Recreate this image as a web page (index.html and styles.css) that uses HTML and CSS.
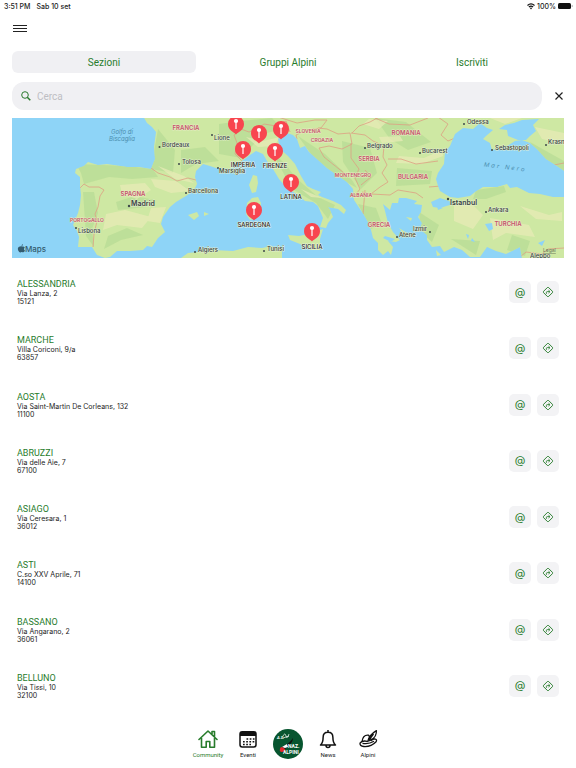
FILE: index.html
```html
<!DOCTYPE html>
<html lang="it">
<head>
<meta charset="utf-8">
<meta name="viewport" content="width=device-width, initial-scale=1">
<title>Sezioni</title>
<link rel="stylesheet" href="styles.css">
</head>
<body>
<svg class="defs" width="0" height="0" aria-hidden="true">
  <symbol id="route" viewBox="0 0 12 12"><rect x="2.4" y="2.4" width="7.2" height="7.2" rx="1" transform="rotate(45 6 6)" fill="none" stroke="currentColor" stroke-width=".9"/><path d="M4.4 7.8V6.5q0-.9.9-.9h2.2M6.5 4.2 8 5.6 6.5 7" fill="none" stroke="currentColor" stroke-width=".9"/></symbol>
  <symbol id="pin" viewBox="-9 -9 18 21" overflow="visible"><path d="M0 10.500C-2 8-8 6.500-8 0A8 8 0 0 1 8 0C8 6.500 2 8 0 10.500Z" fill="#f8454f"/><circle cy="-3" r="2.100" fill="#fff"/><path d="M0-2V5" stroke="#fff" stroke-width="1.200"/></symbol>
</svg>
<header>
  <div class="status">
    <span>3:51 PM</span><span>Sab 10 set</span>
    <span class="power">
      <svg width="8" height="7" viewBox="0 0 8 7" fill="none" stroke="#111" stroke-width="1.200"><path d="M.5 2.500Q4-.7 7.500 2.500M1.900 4Q4 2.100 6.100 4"/><path d="M2.900 5 4 6.400 5.100 5Q4 4.200 2.900 5Z" fill="#111" stroke="none"/></svg>
      100%
      <svg width="15" height="6" viewBox="0 0 15 6"><rect width="13" height="6" rx="1.500" fill="#111"/><path d="M13.800 2v2q.8-.2.800-1t-.8-1" fill="#777"/></svg>
    </span>
  </div>
  <button class="menu" aria-label="Menu"><svg width="14" height="8" viewBox="0 0 14 8"><path d="M0 1.500h14M0 4.500h14M0 7.500h14" stroke="#222" stroke-width="1"/></svg></button>
</header>
<main>
  <div class="tabs">
    <button class="tab active">Sezioni</button>
    <button class="tab">Gruppi Alpini</button>
    <button class="tab">Iscriviti</button>
  </div>
  <form class="search">
    <label class="field">
      <svg width="10" height="10" viewBox="0 0 10 10" fill="none" stroke="#2b7a2e"><circle cx="4" cy="4" r="3.300"/><path d="m6.300 6.300 3 3" stroke-width="1.500"/></svg>
      <input type="search" placeholder="Cerca" aria-label="Cerca">
    </label>
    <button class="clear" type="button" aria-label="Chiudi"><svg width="8" height="8" viewBox="0 0 8 8"><path d="m.5.500 7 7m0-7-7 7" stroke="#222" stroke-width="1.200"/></svg></button>
  </form>
  <svg class="map" viewBox="12 119 552 140" role="img" aria-label="Mappa delle sezioni">
    <defs>
      <clipPath id="land-clip">
        <path id="land" d="M143 117 147 124 152 128 156 133 154 148 155 160 151 170 139 168 127 168 107 165 98 166 88 163 84 167 76 170 75 174 80 178 80 187 81 196 80 206 78 214 73 226 77 232 79 238 78 248 92 248 97 256 105 259 110 258 117 252 130 252 143 251 147 247 152 248 158 239 165 233 161 225 163 218 170 208 176 203 186 197 194 191 197 185 195 178 196 172 203 165 210 167 216 169 230 170 236 167 242 162 246 159 250 156 256 152 263 155 267 162 273 170 279 180 287 189 298 196 305 202 313 203 318 207 323 219 320 228 326 229 328 224 333 218 330 211 328 208 338 210 344 215 346 211 341 206 333 202 322 198 318 196 321 193 313 190 307 187 301 177 295 165 288 157 280 150 278 140 281 136 287 134 293 136 297 140 300 149 305 147 309 153 317 160 327 169 337 176 347 183 353 190 354 201 358 207 364 216 368 223 371 231 373 239 378 244 378 251 383 256 388 252 391 256 393 248 388 242 396 243 400 241 393 233 388 224 385 212 383 205 390 211 392 204 398 204 399 199 406 199 417 202 414 205 422 206 421 213 418 218 422 224 420 230 427 236 427 241 432 248 440 247 444 253 454 248 462 251 470 258 480 258 487 248 496 252 506 255 520 248 522 260 566 260V198L553 198 540 195 529 194 517 188 510 189 507 185 497 188 483 188 475 193 470 197 458 199 450 198 440 192 438 187 436 180 438 174 444 165 445 153 450 147 455 135 463 129 473 130 480 124 487 129 493 131 486 137 483 140 490 144 492 151 499 149 507 147 515 142 522 141 530 144 537 150 546 160 554 165 566 173V117Z"/>
      </clipPath>
    </defs>
    <path d="M12 119H564V259H12Z" fill="#8ed4f7"/>
    <g fill="#cee8a3">
      <use href="#land"/>
      <path d="M253 176 257 177 258 184 256 193 252 194 249 186ZM252 199 258 198 261 204 259 217 254 220 250 221 246 215 247 204ZM288 236 299 237 309 235 323 230 320 240 320 251 311 251 300 245 290 241ZM181 259 188 254 198 253 213 251 233 252 248 248 262 249 272 247 276 252 282 250 282 259ZM188 216 197 213 199 217 194 221ZM204 213 209 215 204 217ZM373 229 378 234 377 237ZM406 218 412 219 411 222ZM399 229 407 234 405 237ZM436 251 441 256 437 257Z"/>
    </g>
    <g clip-path="url(#land-clip)">
      <g fill="#b6dc94">
        <path d="M76 165 127 167 153 170 158 178 132 180 109 178 84 185 81 174ZM83 193 94 193 98 214 92 230 94 248 86 237ZM116 203 135 197 155 201 146 208 118 211ZM108 237 127 229 143 236 121 241 104 250ZM158 130 175 151 173 174 151 170ZM181 151 205 148 219 162 196 165 181 174ZM219 125 240 122 272 119 282 130 263 135 241 159 219 155ZM271 151 286 166 296 179 318 198 335 206 328 220 316 204 292 190ZM298 137 325 155 352 181 357 189 344 182 316 162ZM342 142 370 149 377 174 361 190 343 163ZM375 119 406 123 431 143 408 151 390 140ZM397 169 432 172 430 185 396 187ZM358 205 376 209 382 225 371 230ZM476 191 504 187 506 193 486 200 473 200ZM530 143 566 163V176L539 157ZM419 213 439 226 432 243 421 233ZM451 240 480 242 476 256ZM512 236 530 242 525 257 507 251Z" opacity=".7"/>
      </g>
      <g fill="#e9ebb7">
        <path d="M151 180 176 182 190 192 171 194 155 188ZM120 186 145 184 151 191 137 200 122 195ZM106 215 125 211 151 218 142 229 117 226 103 231ZM151 209 166 208 160 224 147 222ZM158 167 184 177 194 184 175 180ZM246 138 263 142 280 138 274 147 258 148ZM379 138 400 137 403 142 382 144ZM399 157 424 159 442 151 443 157 421 165 396 164ZM454 205 469 202 483 216 473 230 454 222ZM490 219 529 226 535 238 506 234 493 241ZM520 207 549 216 562 213 562 222 536 220ZM369 120 388 122 379 130 363 125ZM490 119 522 119 505 125ZM535 128 564 134V145L542 140ZM301 190 322 199 311 198Z" opacity=".7"/>
      </g>
      <g fill="none" stroke="#dda083" stroke-width=".8">
        <path d="M80 189 84 185 89 188 99 188 104 191 100 197 98 208 95 215 97 222 94 235 93 248M151 169 158 174 170 178 177 182 188 179 196 181M242 162 235 155 237 144 234 136 241 130 249 133 257 130 264 125 276 127 286 122 290 133M278 118 297 124 315 121 327 121 321 129 307 131 296 136 297 140M318 129 327 130 338 135 350 134 352 145 342 150 329 147 319 149 324 158 344 174M351 144 351 159 359 170 355 179 360 190 353 199M352 134 359 127 370 123 379 118M351 134 365 136 373 142 384 147 383 158 387 166 382 174 388 183 380 188 371 195 362 193M365 171 371 178 361 186M365 191 363 215M371 195 390 196 398 191 416 194 423 199M388 160 401 160 416 165 438 162M375 119 389 125 410 126 428 119M438 118 448 125 441 136 448 142 455 139M429 188 441 187M520 258 526 253 542 255 548 250 564 249M554 166 564 164"/>
      </g>
      <path d="M485 225 492 224 493 230 489 232ZM466 235 469 236 468 240ZM472 239 475 243 471 242ZM538 244 545 241 542 247ZM437 207 443 209 438 211Z" fill="#8ed4f7"/>
    </g>
    <g fill="#8ed4f7"><path d="M508 137 507 131 499 130 505 126 514 124 522 121 539 120 533 126 536 132 530 137 526 141 518 141ZM431 203 440 199 449 202 453 205 440 209 433 208ZM385 237 395 240 391 243 383 239Z"/></g>
    <g class="country"><text x="186" y="131">FRANCIA</text><text x="133" y="197">SPAGNA</text><text class="small" x="87" y="223">PORTOGALLO</text><text class="small" x="308" y="134">SLOVENIA</text><text class="small" x="322" y="143">CROAZIA</text><text x="406" y="136">ROMANIA</text><text x="369" y="162">SERBIA</text><text class="small" x="353" y="178">MONTENEGRO</text><text x="413" y="180">BULGARIA</text><text class="small" x="361" y="198">ALBANIA</text><text x="379" y="228">GRECIA</text><text x="508" y="227">TURCHIA</text></g>
    <g class="sea"><text x="122" y="135">Golfo di</text><text x="122" y="142">Biscaglia</text><text x="505" y="170" transform="rotate(7 505 170)" class="wide">Mar Nero</text></g>
    <g fill="#3e4a4a"><circle cx="159.500" cy="148" r="1"/><circle cx="179" cy="165" r="1"/><circle cx="212" cy="136" r="1"/><circle cx="218" cy="169" r="1"/><circle cx="186" cy="194" r="1"/><circle cx="76" cy="229" r="1"/><circle cx="129" cy="207" r="1.200"/><circle cx="195" cy="253" r="1"/><circle cx="264" cy="252" r="1"/><circle cx="365" cy="149" r="1"/><circle cx="420" cy="154" r="1"/><circle cx="397" cy="238" r="1"/><circle cx="430" cy="233" r="1"/><circle cx="464" cy="125" r="1"/><circle cx="492" cy="151" r="1"/><circle cx="546" cy="146" r="1"/><circle cx="448" cy="200" r="1.200"/><circle cx="486" cy="213" r="1"/></g>
    <g class="city"><text x="162" y="148">Bordeaux</text><text x="182" y="165">Tolosa</text><text x="214" y="141">Lione</text><text x="219" y="174">Marsiglia</text><text x="188" y="194">Barcellona</text><text x="78" y="234">Lisbona</text><text x="131" y="207" class="capital">Madrid</text><text x="198" y="253">Algiers</text><text x="267" y="252">Tunisi</text><text x="367" y="149">Belgrado</text><text x="422" y="154">Bucarest</text><text x="399" y="238">Atene</text><text x="413" y="232">Izmir</text><text x="467" y="125">Odessa</text><text x="495" y="151">Sebastopoli</text><text x="548" y="145">Krasn</text><text x="450" y="206" class="capital">Istanbul</text><text x="488" y="213">Ankara</text><text x="530" y="259">Aleppo</text></g>
    <g class="pins"><use href="#pin" x="227" y="116" width="18" height="21"/><use href="#pin" x="250" y="125" width="18" height="21"/><use href="#pin" x="272" y="121" width="18" height="21"/><use href="#pin" x="234" y="141" width="18" height="21"/><use href="#pin" x="266" y="143" width="18" height="21"/><use href="#pin" x="282" y="174" width="18" height="21"/><use href="#pin" x="245" y="202" width="18" height="21"/><use href="#pin" x="303" y="223" width="18" height="21"/></g>
    <g class="place"><text x="243" y="168">IMPERIA</text><text x="275" y="169">FIRENZE</text><text x="291" y="200">LATINA</text><text x="254" y="228">SARDEGNA</text><text x="312" y="250">SICILIA</text></g>
    <path d="M22.500 247.500q-1.500-.7-2.700.1-2.800.9-1.600 3.900 1.300 2.600 2.700 1.700.7-.4 1.500 0 1.400.7 2.600-1.700-1.900-1.300-.2-3.100-1-1.200-2.300-.9m-1-.4q0-1.700 1.500-2.100.1 1.800-1.500 2.100" fill="#345c70"/>
    <text class="brand" x="25" y="253">Maps</text><text class="legal" x="543" y="253">Legal</text>
  </svg>
  <ul class="list">
    <li><div><h2>ALESSANDRIA</h2><p>Via Lanza, 2</p><p>15121</p></div><button aria-label="Email">@</button><button aria-label="Indicazioni"><svg><use href="#route"/></svg></button></li>
    <li><div><h2>MARCHE</h2><p>Villa Coriconi, 9/a</p><p>63857</p></div><button aria-label="Email">@</button><button aria-label="Indicazioni"><svg><use href="#route"/></svg></button></li>
    <li><div><h2>AOSTA</h2><p>Via Saint-Martin De Corleans, 132</p><p>11100</p></div><button aria-label="Email">@</button><button aria-label="Indicazioni"><svg><use href="#route"/></svg></button></li>
    <li><div><h2>ABRUZZI</h2><p>Via delle Aie, 7</p><p>67100</p></div><button aria-label="Email">@</button><button aria-label="Indicazioni"><svg><use href="#route"/></svg></button></li>
    <li><div><h2>ASIAGO</h2><p>Via Ceresara, 1</p><p>36012</p></div><button aria-label="Email">@</button><button aria-label="Indicazioni"><svg><use href="#route"/></svg></button></li>
    <li><div><h2>ASTI</h2><p>C.so XXV Aprile, 71</p><p>14100</p></div><button aria-label="Email">@</button><button aria-label="Indicazioni"><svg><use href="#route"/></svg></button></li>
    <li><div><h2>BASSANO</h2><p>Via Angarano, 2</p><p>36061</p></div><button aria-label="Email">@</button><button aria-label="Indicazioni"><svg><use href="#route"/></svg></button></li>
    <li><div><h2>BELLUNO</h2><p>Via Tissi, 10</p><p>32100</p></div><button aria-label="Email">@</button><button aria-label="Indicazioni"><svg><use href="#route"/></svg></button></li>
  </ul>
</main>
<nav>
  <a href="#community" class="current"><svg viewBox="0 0 20 20" fill="none" stroke="currentColor" stroke-width="1.600"><path d="M1 10.500 10 2l9 8.500M3.500 9v9.200h4.700v-5.700h3.600v5.700h4.700V9M14 5V2.500h2.500v5" stroke-linejoin="round" stroke-linecap="round"/></svg>Community</a>
  <a href="#eventi"><svg viewBox="0 0 20 20"><rect x="2" y="2.800" width="16" height="15.200" rx="2.200" fill="none" stroke="#111" stroke-width="1.500"/><path d="M2 3h16v4H2Z" fill="#111"/><path d="M8.500 10h8M5 12.700h11.500M5 15.400h8" stroke="#111" stroke-width="1.500" stroke-dasharray="1.700 1.500"/></svg>Eventi</a>
  <a href="#home" class="logo" aria-label="Associazione Nazionale Alpini"><svg viewBox="0 0 30 30"><circle cx="15" cy="15" r="15" fill="#07552f"/><text x="4" y="10" class="script">A.S.</text><path d="M10 7q2-4 3 0t3-2m-6 4 6-2" fill="none" stroke="#fff" stroke-width=".7"/><path d="M9 18Q16 15 20 9q0 5-8 11Z" fill="#111"/><path d="m9 18 5-3 1 3-3 1Z" fill="#fff"/><path d="M7 20q0-2 2-2l3 2q0 3-3 3-3 0-2-3" fill="#e6282c"/><text x="15" y="19">NAZ.</text><text x="10" y="25">ALPINI</text></svg></a>
  <a href="#news"><svg viewBox="0 0 20 20" fill="none" stroke="#111" stroke-width="1.500" stroke-linejoin="round"><path d="M10 1v2M2.500 16h15q-2.600-2-2.600-7.500Q14.900 3.300 10 3.300T5.100 8.500Q5.100 14 2.500 16ZM8 16.500q0 2 2 2t2-2"/></svg>News</a>
  <a href="#alpini"><svg viewBox="0 0 20 20" fill="none" stroke="#111" stroke-width="1.300" stroke-linejoin="round"><path d="M4 12.500Q5 5.500 10.500 6.200L14 12M2 14.200q2-3 7.200-1.900l7.300-2.500q3 .4 1.600 3-5 5.200-12.300 4.700-4-.3-3.800-3.300ZM9.800 12.300Q11 6 18.400 1.600q.3 5.800-4.700 8.900M11 11l4.500-6M4.500 14.300q6 1.200 11.500-2"/></svg>Alpini</a>
</nav>
</body>
</html>
```
FILE: styles.css
```css
* { box-sizing: border-box; }
body {
  margin: 0;
  min-height: 100vh;
  display: flex;
  flex-direction: column;
  background: #fff;
  color: #222;
  font-family: Inter, "Liberation Sans", sans-serif;
}
button { border: 0; padding: 0; background: none; font: inherit; color: inherit; }
svg { display: block; }
.defs { position: absolute; }
.status { display: flex; align-items: center; gap: 6px; height: 12px; padding: 0 3px 0 4px; font-size: 7px; font-weight: 500; }
.power { margin-left: auto; display: flex; align-items: center; gap: 2px; }
.menu { display: block; margin: 8px 13px 0; padding: 4px 0; }
main { flex: 1; display: flex; flex-direction: column; padding: 0 12px; }
.tabs { display: grid; grid-template-columns: repeat(3, 1fr); margin-top: 15px; color: #287c2c; font-family: Roboto, sans-serif; font-size: 10px; }
.tab { height: 22px; border-radius: 6px; }
.active { background: #f0f0f3; }
.search { display: flex; align-items: center; gap: 12px; margin: 9px 0 8px; }
.field { flex: 1; display: flex; align-items: center; gap: 6px; height: 28px; padding: 0 9px; background: #f0f0f3; border-radius: 12px; }
.field input { flex: 1; min-width: 0; border: 0; padding: 0; background: none; font: 10px Roboto, sans-serif; outline: 0; }
.field input::placeholder { color: #bebec3; opacity: 1; }
.clear { padding: 4px 1px; }
.map { width: 100%; height: auto; font-size: 7px; overflow: hidden; }
.map text { paint-order: stroke; stroke-linejoin: round; }
.country { fill: #c5526b; font-weight: 600; text-anchor: middle; stroke: #e6edc3; stroke-width: 1px; font-size: 6px; }
.country .small { font-size: 5px; }
.sea { fill: #4b8eaf; font-style: italic; font-size: 6px; text-anchor: middle; }
.sea .wide { letter-spacing: 2px; }
.city { fill: #39423f; stroke: #e3efcf; stroke-width: 1px; font-weight: 500; font-size: 6px; }
.city .capital { font-size: 7px; font-weight: 600; }
.place { text-anchor: middle; fill: #222; stroke: #edf4e5; stroke-width: 1px; font-weight: 500; font-size: 6px; }
.brand { fill: #345c70; font-size: 8px; font-weight: 500; }
.legal { fill: #68745b; font-size: 5px; text-decoration: underline; }
.list { flex: 1; display: grid; grid-auto-rows: 1fr; list-style: none; margin: 6px 0 0; padding: 0 5px; }
.list li { display: flex; align-items: center; gap: 6px; min-height: 40px; }
.list div { flex: 1; }
.list h2 { margin: 0; font-family: Roboto, sans-serif; font-size: 9px; line-height: 12px; font-weight: 400; color: #287c2c; }
.list p { margin: 0; font-size: 7px; line-height: 8px; }
.list button { display: grid; place-items: center; width: 22px; height: 22px; border-radius: 5px; background: #f3f3f5; color: #287c2c; font-size: 11px; line-height: 11px; }
.list button svg { width: 12px; height: 12px; }
nav { display: flex; justify-content: center; align-items: center; height: 54px; padding-top: 6px; }
nav a { display: flex; flex-direction: column; align-items: center; gap: 2px; width: 40px; color: #222; text-decoration: none; font-family: Roboto, sans-serif; font-size: 6px; line-height: 8px; }
nav svg { width: 20px; height: 20px; }
.current { color: #287c2c; }
.logo svg { width: 30px; height: 30px; }
.logo text { fill: #fff; font-size: 5px; font-weight: 700; }
.logo .script { font-style: italic; font-size: 4px; }
```
